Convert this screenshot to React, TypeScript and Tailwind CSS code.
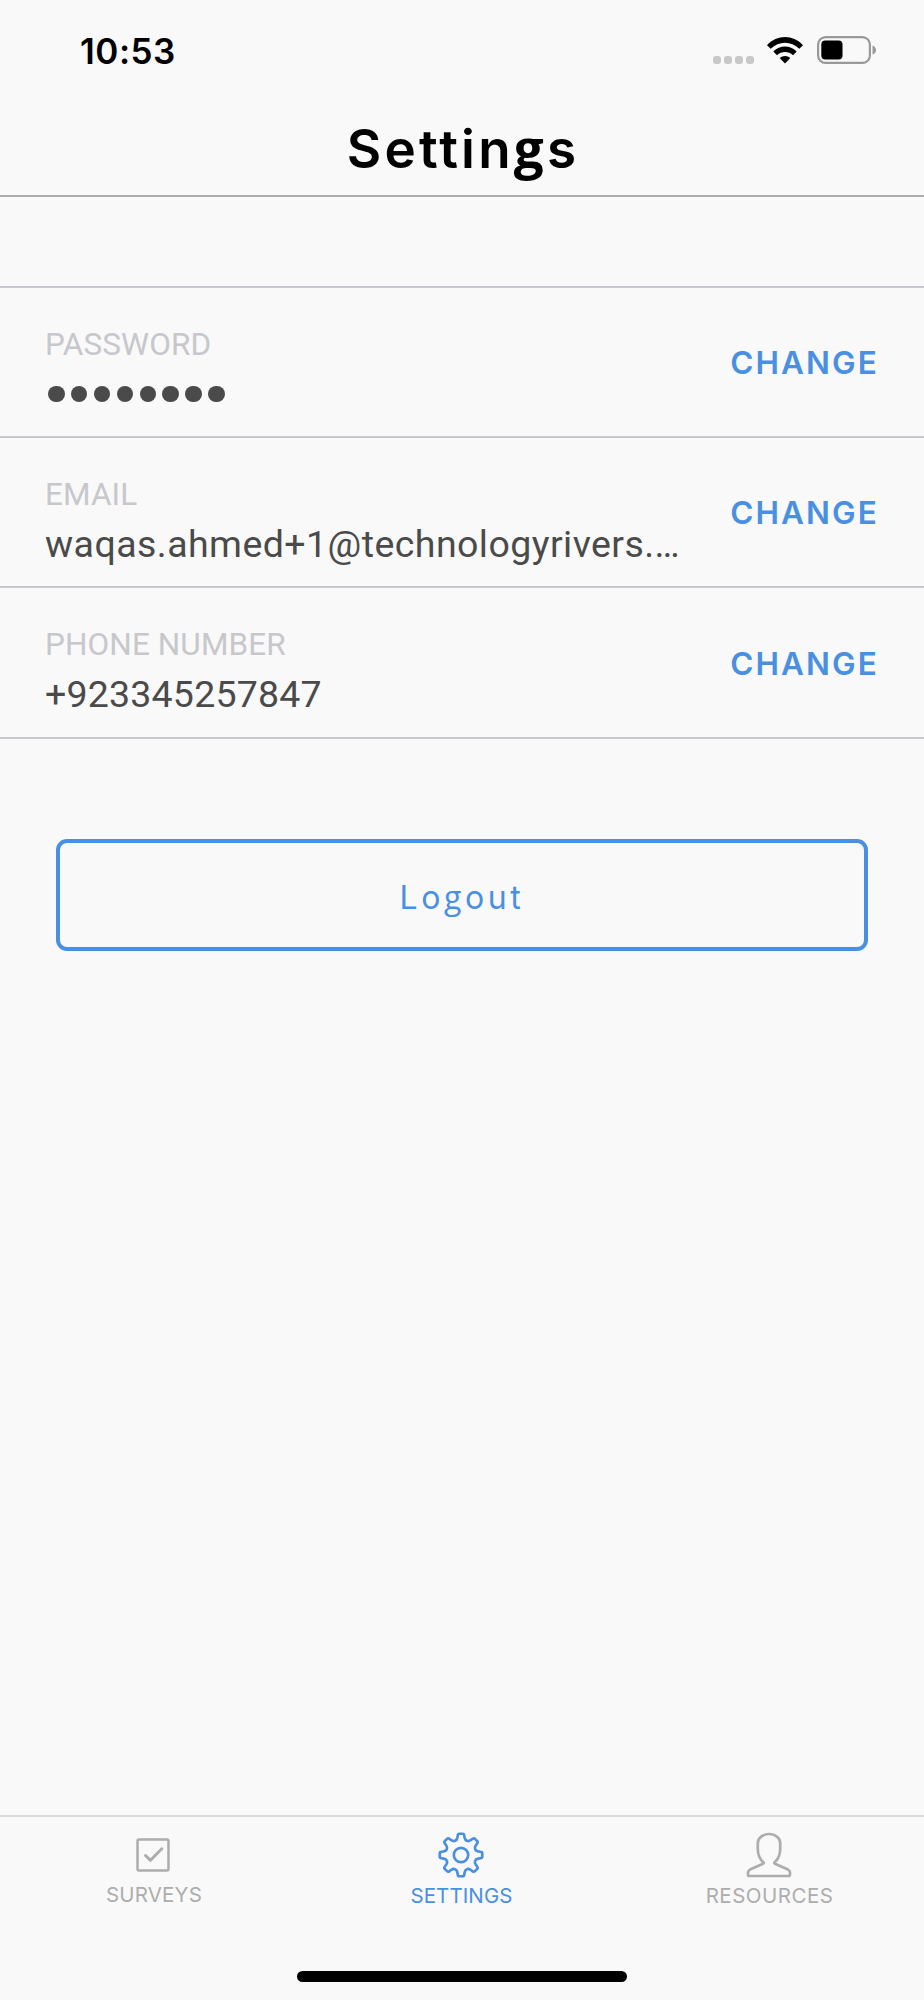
import React from "react";

const rows = [
  { label: "PASSWORD", value: "", spacing: "", height: "h-[150px]" },
  { label: "EMAIL", value: "waqas.ahmed+1@technologyrivers.…", spacing: "tracking-[0.44px]", height: "h-[150px]" },
  { label: "PHONE NUMBER", value: "+923345257847", spacing: "tracking-[0.2px]", height: "h-[151px]" },
];

function gearPath() {
  const pts: string[] = [];
  const c = 24;
  const point = (r: number, deg: number) => {
    const a = (deg * Math.PI) / 180;
    return `${(c + r * Math.sin(a)).toFixed(2)} ${(c - r * Math.cos(a)).toFixed(2)}`;
  };
  for (let i = 0; i < 8; i++) {
    const a = i * 45;
    pts.push(`${i === 0 ? "M" : "L"}${point(19.8, a - 9.5)}`);
    pts.push(`Q${point(21.6, a - 8)} ${point(21.3, a - 4)}`);
    pts.push(`L${point(21.3, a + 4)}`);
    pts.push(`Q${point(21.6, a + 8)} ${point(19.8, a + 9.5)}`);
    pts.push(`L${point(17.6, a + 12)}`);
    pts.push(`Q${point(15.4, a + 15.5)} ${point(15.3, a + 22.5)}`);
    pts.push(`Q${point(15.4, a + 29.5)} ${point(17.6, a + 33)}`);
  }
  return pts.join(" ") + "Z";
}

function StatusBar() {
  return (
    <div className="flex h-[100px] shrink-0 items-center justify-between pl-[80px] pr-[47px]">
      <span className="pt-[2px] text-[35px] font-semibold leading-none tracking-[0.5px] text-black">10:53</span>
      <div className="flex items-center">
        <div className="mr-[13px] mt-[19px] flex gap-[3px]">
          {[0, 1, 2, 3].map((i) => (
            <span key={i} className="size-[8px] rounded-[3px] bg-[#c8c8c8]" />
          ))}
        </div>
        <svg width="36" height="27" viewBox="0 0 36 27" className="mr-[14px]">
          <path d="M0 8.2C10-2.6 26-2.6 36 8.2L32.3 11.8C24.2 3.6 11.8 3.6 3.7 11.8Z" />
          <path d="M6.3 14.6C13 7.8 23 7.8 29.7 14.6L26 18.2C21.4 13.8 14.6 13.8 10 18.2Z" />
          <path d="M12.7 21C15.7 18.3 20.3 18.3 23.3 21L18 26.5Z" />
        </svg>
        <svg width="60" height="28" viewBox="0 0 60 28">
          <rect x="1.1" y="1.1" width="51.8" height="25.8" rx="7.5" fill="none" stroke="#999" strokeWidth="2.2" />
          <rect x="4.3" y="4.5" width="21.2" height="19" rx="4" />
          <path d="M55.5 9.5Q59 11 59 14T55.5 18.5Z" fill="#999" />
        </svg>
      </div>
    </div>
  );
}

function Tab({
  label,
  className,
  labelClassName,
  children,
}: {
  label: string;
  className: string;
  labelClassName: string;
  children: React.ReactNode;
}) {
  return (
    <div className={`flex flex-1 flex-col items-center pt-[14px] ${className}`}>
      <div className="pr-[2px]">{children}</div>
      <span className={`text-[20.5px] leading-[26px] ${labelClassName}`}>{label}</span>
    </div>
  );
}

export default function App() {
  return (
    <div className="flex h-[2000px] w-[924px] flex-col overflow-hidden bg-[#f9f9f9] font-['Inter',sans-serif]">
      <StatusBar />
      <header className="flex h-[97px] shrink-0 items-center justify-center border-b-2 border-[#adadad] pl-[2px] pt-[2px]">
        <h1 className="text-[53px] font-semibold leading-none tracking-[3.2px] text-black">
          Settin<span className="font-['Open_Sans',sans-serif] font-bold">g</span>s
        </h1>
      </header>
      <main className="flex flex-1 flex-col pt-[89px]">
        <div className="border-t-2 border-[#c7c7cc]">
          {rows.map((row) => (
            <div
              key={row.label}
              className={`flex items-center justify-between border-b-2 border-[#c7c7cc] pl-[45px] pr-[45px] ${row.height}`}
            >
              <div className="flex flex-col pt-[24px] font-['Roboto',sans-serif]">
                <span className="text-[31.5px] leading-[40px] tracking-[0.1px] text-[#c7c7cc]">{row.label}</span>
                {row.value ? (
                  <span className={`h-[59px] text-[37.5px] leading-[59px] text-[#4a4a4a] ${row.spacing}`}>
                    {row.value}
                  </span>
                ) : (
                  <span className="flex h-[59px] items-center gap-[6.4px] pl-[3px]">
                    {[0, 1, 2, 3, 4, 5, 6, 7].map((i) => (
                      <span key={i} className="size-[16.5px] rounded-full bg-[#4a4a4a]" />
                    ))}
                  </span>
                )}
              </div>
              <button className="pt-[2px] text-[31.5px] font-semibold leading-none tracking-[2.1px] text-[#4a90e2]">
                CHANGE
              </button>
            </div>
          ))}
        </div>
        <button className="mx-[56px] mt-[100px] flex h-[112px] items-center justify-center rounded-[11px] border-4 border-[#4a90e2] pt-[4px] text-[32px] tracking-[3.6px] text-[#4a90e2]">
          <span>
            Lo<span className="font-['Open_Sans',sans-serif]">g</span>out
          </span>
        </button>
      </main>
      <nav className="flex h-[156px] shrink-0 border-t-2 border-[#d9d9d9]">
        <Tab label="SURVEYS" className="text-[#adadad]" labelClassName="mt-[3px] tracking-[0.2px]">
          <svg width="48" height="48" viewBox="0 0 48 48" fill="none" stroke="#adadad" strokeLinecap="round" strokeLinejoin="round">
            <rect x="8.5" y="8.5" width="31" height="31" rx="1.5" strokeWidth="2.5" />
            <path d="M16.5 24.5l5 4.8 11.3-11.5" strokeWidth="3" />
          </svg>
        </Tab>
        <Tab label="SETTINGS" className="text-[#4a90e2]" labelClassName="mt-[4px] pr-[1px] tracking-[0.1px]">
          <svg width="48" height="48" viewBox="0 0 48 48" fill="none" stroke="#4a90e2" strokeWidth="2.7" strokeLinejoin="round">
            <path d={gearPath()} />
            <circle cx="24" cy="24" r="7.2" />
          </svg>
        </Tab>
        <Tab label="RESOURCES" className="text-[#adadad]" labelClassName="mt-[4px] pr-[1px] tracking-[0.5px]">
          <svg width="48" height="48" viewBox="0 0 48 48" fill="none" stroke="#adadad" strokeWidth="2.7" strokeLinejoin="round">
            <path d="M24 3C17.5 3 12.8 7.5 12.8 12V18C12.8 24 14.5 28 18.6 31.5Q19 32.4 17.5 33L5 38.6Q3 39.6 3 41.3V43.5Q3 45 4.5 45H43.5Q45 45 45 43.5V41.3Q45 39.6 43 38.6L30.5 33Q29 32.4 29.4 31.5C33.5 28 35.2 24 35.2 18V12C35.2 7.5 30.5 3 24 3Z" />
          </svg>
        </Tab>
      </nav>
      <div className="flex h-[29px] shrink-0 justify-center">
        <div className="h-[11px] w-[330px] rounded-full bg-black" />
      </div>
    </div>
  );
}
